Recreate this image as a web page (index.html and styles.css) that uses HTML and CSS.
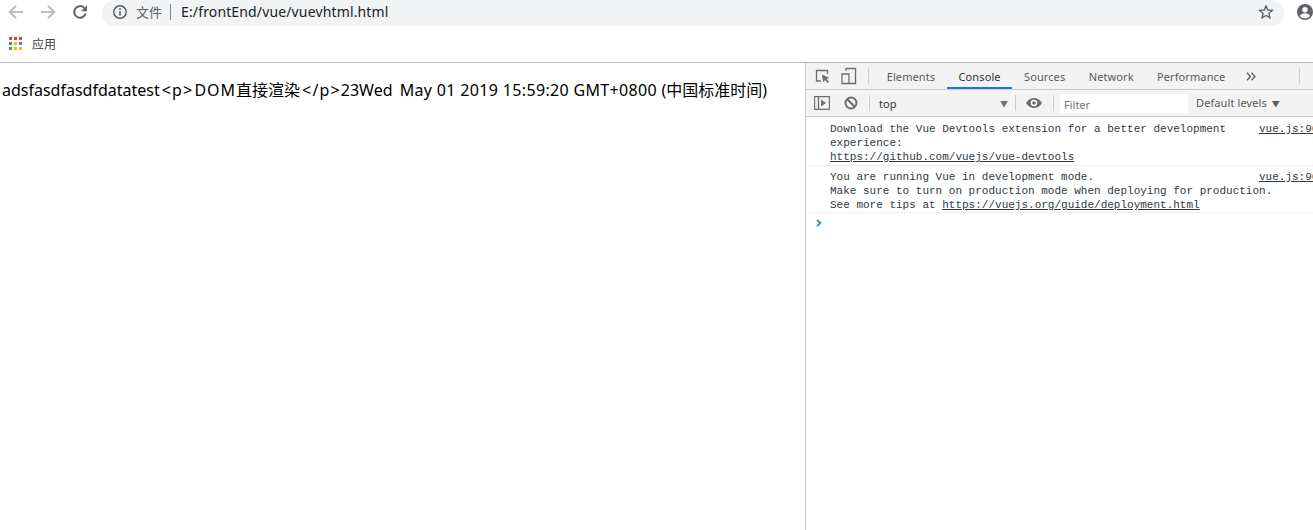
FILE: index.html
```html
<!DOCTYPE html>
<html lang="zh">
<head>
<meta charset="utf-8">
<title>vuevhtml</title>
<link rel="stylesheet" href="styles.css">
</head>
<body>
<header class="chrome">
  <div class="toolbar">
    <button class="nav"><svg width="16" height="16" viewBox="0 0 16 16"><path d="M15 8H2.5M8 1.7 1.700 8 8 14.300" class="stroke-off"/></svg></button>
    <button class="nav"><svg width="16" height="16" viewBox="0 0 16 16"><path d="M1 8h12.500M8 1.700 14.300 8 8 14.300" class="stroke-off"/></svg></button>
    <button class="nav"><svg width="16" height="16" viewBox="0 0 16 16"><path d="M13.600 9.500A5.800 5.800 0 1 1 12.200 3.900" class="stroke-on"/><path d="M15 1.200v6h-6z" class="fill-on"/></svg></button>
    <div class="omnibox">
      <svg class="info" width="16" height="16" viewBox="0 0 16 16"><circle cx="8" cy="8" r="6.200" class="ring"/><path d="M7.200 7h1.600v4.600H7.200zM7.200 4.300h1.600v1.600H7.200z" class="fill-on"/></svg>
      <span class="scheme">文件</span>
      <span class="sep"></span>
      <span class="url">E:/frontEnd/vue/vuevhtml.html</span>
      <svg class="star" width="16" height="16" viewBox="0 0 16 16"><path d="M8 1.900 9.800 6l4.500.4-3.400 3 1 4.400L8 11.500l-3.900 2.300 1-4.400-3.400-3L6.200 6z" class="star-line"/></svg>
    </div>
    <svg class="avatar" width="16" height="16" viewBox="0 0 16 16"><circle cx="8" cy="8" r="8" class="fill-on"/><circle cx="8" cy="5.800" r="2.700" class="fill-white"/><path d="M2.800 12c1-2 3.200-2.800 5.200-2.800s4.200.8 5.200 2.800c-1.200 1.500-3.100 2.400-5.200 2.400S4 13.500 2.800 12z" class="fill-white"/></svg>
  </div>
  <div class="bookmarks">
    <svg class="apps" width="14" height="14" viewBox="0 0 14 14">
      <rect x="0" y="0" width="3" height="3" fill="#ea4335"/><rect x="5" y="0" width="3" height="3" fill="#ea4335"/><rect x="10" y="0" width="3" height="3" fill="#ea4335"/>
      <rect x="0" y="5" width="3" height="3" fill="#34a853"/><rect x="5" y="5" width="3" height="3" fill="#fbbc04"/><rect x="10" y="5" width="3" height="3" fill="#4285f4"/>
      <rect x="0" y="10" width="3" height="3" fill="#34a853"/><rect x="5" y="10" width="3" height="3" fill="#fbbc04"/><rect x="10" y="10" width="3" height="3" fill="#fbbc04"/>
    </svg>
    <span class="bm-label">应用</span>
  </div>
</header>
<main class="split">
  <section class="page">adsfasdfasdfdatatest<span class="tag">&lt;p&gt;</span><span class="caps">DOM</span>直接渲染<span class="tag">&lt;/p&gt;</span><span class="weekday">23Wed </span><span class="date">May 01 2019 15:59:20 GMT+0800 </span>(中国标准时间)</section>
  <aside class="devtools">
    <div class="tabs">
      <svg class="tool" width="16" height="16" viewBox="0 0 16 16"><path d="M6 13H1.500V2.500h11V6" class="tool-line"/><path d="M7 6.500 14.500 10l-3 1 2.500 3-1.500 1-2.300-3-2 2.300z" class="tool-fill"/></svg>
      <svg class="tool tool-device" width="16" height="18" viewBox="0 0 16 18"><path d="M5 4V1.500h9.500v15H1V7h7v9.500" class="tool-line"/></svg>
      <span class="divider divider-tabs"></span>
      <span class="tab">Elements</span>
      <span class="tab active">Console</span>
      <span class="tab">Sources</span>
      <span class="tab">Network</span>
      <span class="tab">Performance</span>
      <svg class="more" width="10" height="9" viewBox="0 0 10 9"><path d="M1 .8 4.500 4.500 1 8.200M5.500 .8 9 4.500 5.500 8.200" class="more-line"/></svg>
      <span class="divider divider-end"></span>
    </div>
    <div class="filterbar">
      <svg class="tool" width="16" height="14" viewBox="0 0 16 14"><path d="M.5.500h15v13H.5zM4.500.500v13" class="tool-line"/><path d="M7 3.500 12 7l-5 3.500z" class="tool-fill"/></svg>
      <svg class="tool tool-block" width="14" height="14" viewBox="0 0 14 14"><circle cx="7" cy="7" r="5.500" class="block"/><path d="M3 3l8 8" class="block"/></svg>
      <span class="divider divider-block"></span>
      <span class="context">top</span>
      <span class="caret">▼</span>
      <span class="divider divider-caret"></span>
      <svg class="tool tool-eye" width="16" height="12" viewBox="0 0 16 12"><path d="M0 6c2-3.500 5-5 8-5s6 1.500 8 5c-2 3.500-5 5-8 5s-6-1.500-8-5z" class="tool-fill"/><circle cx="8" cy="6" r="3.200" class="fill-white"/><circle cx="8" cy="6" r="1.800" class="tool-fill"/></svg>
      <span class="divider divider-eye"></span>
      <span class="filter">Filter</span>
      <span class="levels">Default levels</span>
      <span class="levels-caret">▼</span>
    </div>
    <div class="console">
      <div class="msg">
        <div class="msg-text">Download the Vue Devtools extension for a better development<br>experience:<br><a class="link">https://github.com/vuejs/vue-devtools</a></div>
        <a class="link source">vue.js:90</a>
      </div>
      <div class="msg">
        <div class="msg-text">You are running Vue in development mode.<br>Make sure to turn on production mode when deploying for production.<br>See more tips at <a class="link">https://vuejs.org/guide/deployment.html</a></div>
        <a class="link source">vue.js:90</a>
      </div>
      <div class="prompt"><svg width="6" height="8" viewBox="0 0 6 8"><path d="M1 .8 4.400 4 1 7.200" class="prompt-mark"/></svg></div>
    </div>
  </aside>
</main>
</body>
</html>
```
FILE: styles.css
```css
* { box-sizing: border-box; }
html, body { margin: 0; height: 100%; }
body {
  width: 1313px;
  height: 530px;
  overflow: hidden;
  background: #fff;
  font-family: "Noto Sans", "Noto Sans CJK SC", sans-serif;
  display: flex;
  flex-direction: column;
}
.chrome { height: 63px; border-bottom: 1px solid #b9b9b9; flex: none; }
.toolbar { height: 26px; display: flex; align-items: center; }
.nav { width: 32px; height: 26px; padding: 0 0 2px; border: 0; background: none; display: flex; align-items: center; justify-content: center; }
.stroke-off { fill: none; stroke: #bcbec1; stroke-width: 2; }
.stroke-on { fill: none; stroke: #5f6368; stroke-width: 2; }
.fill-on { fill: #5f6368; }
.fill-white { fill: #fff; }
.ring { fill: none; stroke: #5f6368; stroke-width: 1.500; }
.star-line { fill: none; stroke: #5f6368; stroke-width: 1.400; }
.omnibox {
  width: 1182px;
  height: 26px;
  margin-left: 6px;
  background: #f1f3f4;
  border-radius: 13px;
  display: flex;
  align-items: center;
  padding: 0 10px 2px;
}
.scheme { margin: 0 0 2px 8px; font-size: 13px; color: #5f6368; }
.sep { width: 1px; height: 16px; background: #80868b; margin: 0 9px 0 8px; }
.url { margin: 0 0 2px 1px; font-size: 14px; letter-spacing: .14px; color: #202124; flex: 1; }
.avatar { margin: 0 0 2px 13px; flex: none; }
.bookmarks { height: 36px; display: flex; align-items: center; padding-left: 9px; }
.bm-label { margin-left: 9px; font-size: 12px; color: #3c4043; }
.split { flex: 1; display: flex; min-height: 0; }
.page { width: 805px; padding: 16px 0 0 2px; font-size: 16px; line-height: 22px; color: #000; white-space: nowrap; }
.tag { letter-spacing: 1.150px; padding-left: 2px; }
.caps { letter-spacing: 1px; padding-left: 1px; }
.weekday { word-spacing: 3px; }
.date { letter-spacing: .34px; }
.devtools { flex: 1; border-left: 1px solid #ccc; display: flex; flex-direction: column; min-width: 0; overflow: hidden; }
.tabs, .filterbar { display: flex; align-items: center; background: #f3f3f3; border-bottom: 1px solid #ccc; flex: none; }
.tabs { height: 27px; padding-left: 9px; }
.filterbar { height: 27px; padding-left: 8px; }
.tool-line { fill: none; stroke: #6e6e6e; stroke-width: 1.300; }
.tool-fill { fill: #6e6e6e; }
.tool { flex: none; }
.tool-device { margin-left: 10px; }
.tool-block { margin-left: 14px; }
.block { fill: none; stroke: #6e6e6e; stroke-width: 2; }
.divider { width: 1px; height: 16px; background: #ccc; flex: none; }
.divider-tabs { margin: 0 6px 0 11px; }
.divider-end { margin-left: 43px; }
.divider-block { margin: 0 9px 0 11px; }
.divider-caret { margin: 0 10px 0 7px; }
.divider-eye { margin: 0 6px 0 11px; }
.tab { font-size: 11px; letter-spacing: .1px; color: #5a5a5a; height: 26px; line-height: 27px; padding: 0 11.700px; border-bottom: 2px solid transparent; }
.tab.active { color: #333; border-bottom-color: #1a73e8; }
.more { flex: none; margin-left: 9px; }
.more-line { fill: none; stroke: #5a5a5a; stroke-width: 1.300; }
.context { width: 121px; font-size: 11px; line-height: 14px; padding-top: 1px; color: #333; }
.caret { font-size: 8px; color: #6e6e6e; }
.filter { width: 128px; height: 19px; background: #fff; font-size: 11px; line-height: 21px; color: #757575; padding-left: 4px; }
.levels { font-size: 11px; letter-spacing: .1px; line-height: 14px; color: #5a5a5a; margin-left: 8px; white-space: nowrap; }
.levels-caret { font-size: 8px; color: #5a5a5a; margin-left: 5px; }
.console { flex: 1; padding-top: 1px; font-family: "Liberation Mono", monospace; font-size: 11px; line-height: 14px; color: #303942; }
.msg { padding: 4px 0 0 24px; border-bottom: 1px solid #f0f0f0; white-space: nowrap; position: relative; }
.msg:first-child { padding-bottom: 1px; }
.source { position: absolute; left: 453px; top: 4px; }
.link { text-decoration: underline; color: #303942; }
.prompt { padding: 6px 0 0 10px; line-height: 8px; }
.prompt-mark { fill: none; stroke: #2b7ee0; stroke-width: 1.700; }
```
